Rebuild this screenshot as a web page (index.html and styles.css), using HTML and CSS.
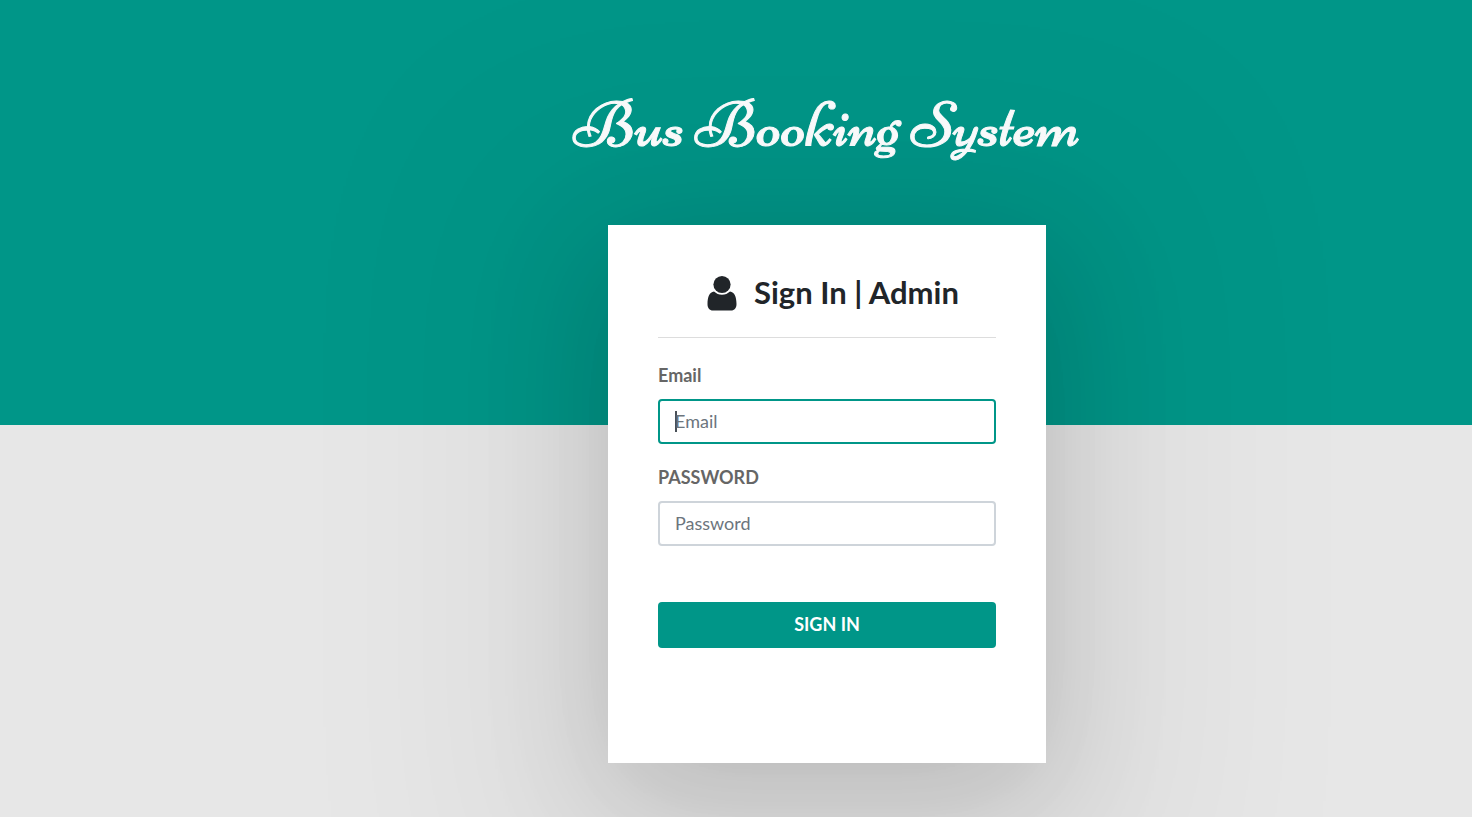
FILE: index.html
```html
<!DOCTYPE html>
<html lang="en">
<head>
<meta charset="utf-8">
<title>Bus Booking System</title>
<link rel="stylesheet" href="styles.css">
</head>
<body>
<main class="login">
  <h1 class="logo">Bus Booking System</h1>
  <section class="card">
    <form class="form">
      <h2 class="form-head">
        <svg class="user-icon" viewBox="0 -1 30 38" aria-hidden="true"><circle cx="15" cy="9.500" r="8.600"/><path d="M7 16.500C2.500 17 .5 22 .5 29c0 4 2 6.500 5.500 6.500h18c3.500 0 5.500-2.500 5.500-6.500 0-7-2-12-6.500-12.500-2.200 2-4.900 3.300-8 3.300s-5.800-1.300-8-3.300z"/></svg>
        <span>Sign In | Admin</span>
      </h2>
      <div class="group">
        <label for="email">Email</label>
        <input id="email" type="text" placeholder="Email" autofocus>
      </div>
      <div class="group">
        <label for="password">PASSWORD</label>
        <input id="password" type="password" placeholder="Password">
      </div>
      <button class="submit" type="submit">SIGN IN</button>
    </form>
  </section>
</main>
</body>
</html>
```
FILE: styles.css
```css
* { box-sizing: border-box; }
body {
  margin: 0;
  min-height: 100vh;
  font-family: Lato, sans-serif;
  font-size: 18px;
  line-height: 27px;
  color: #212529;
  background: linear-gradient(#009688 425px, #e7e7e7 425px);
}
.login {
  display: flex;
  flex-direction: column;
  align-items: center;
  padding: 88px 0 54px 182px;
  overflow: hidden;
}
.logo {
  position: relative;
  z-index: 1;
  margin: 0 0 61px;
  font-family: "Niconne", "Liberation Serif", serif;
  font-weight: 400;
  font-size: 65px;
  line-height: 76px;
  color: #f8f9fa;
  -webkit-text-stroke: 1px #f8f9fa;
}
.card {
  width: 438px;
  min-height: 538px;
  background: #fff;
  box-shadow:
    0 36px 210px 128px rgba(0, 0, 0, 0.05),
    0 36px 119px 0 rgba(0, 0, 0, 0.16);
}
.form { padding: 48px 50px; }
.form-head {
  display: flex;
  justify-content: center;
  align-items: center;
  gap: 17px;
  margin: 0 0 24px;
  padding: 0 0 24px 12px;
  border-bottom: 1px solid #ddd;
  font-size: 31px;
  font-weight: 700;
  line-height: 40px;
}
.form-head span { padding-bottom: 2px; line-height: 38px; }
.user-icon { width: 30px; height: 38px; fill: #212529; }
.group { margin-bottom: 20px; }
.group label {
  display: block;
  margin-bottom: 10px;
  font-weight: 700;
  color: #666;
}
.group input {
  display: block;
  width: 100%;
  height: 45px;
  padding: 0 15px 1px;
  border: 2px solid #ced4da;
  border-radius: 4px;
  font: inherit;
  color: #495057;
  background: #fff;
  outline: none;
}
.group input::placeholder { color: #6c757d; opacity: 1; }
.group input:focus {
  border-color: #009688;
  caret-color: transparent;
  background: linear-gradient(#495057, #495057) 15px 10px / 2px 21px no-repeat #fff;
}
.submit {
  display: block;
  width: 100%;
  height: 46px;
  margin-top: 56px;
  padding: 0 0 2px;
  border: 0;
  border-radius: 4px;
  font: inherit;
  font-weight: 700;
  color: #fff;
  background: #009688;
}
```
